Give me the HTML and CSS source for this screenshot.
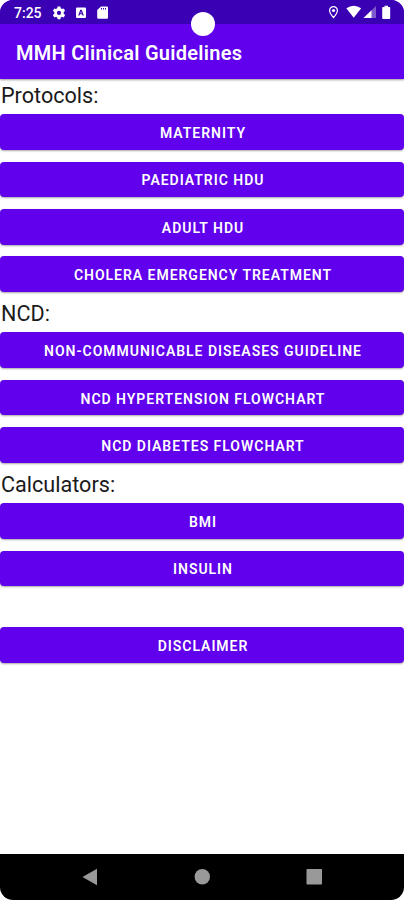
FILE: index.html
```html
<!DOCTYPE html>
<html lang="en">
<head>
<meta charset="utf-8">
<title>MMH Clinical Guidelines</title>
<link rel="stylesheet" href="styles.css">
</head>
<body>
<div class="phone">
  <header class="top">
    <div class="status">
      <span class="time">7:25</span>
      <svg class="left-icons" width="58" height="24" viewBox="0 0 58 24" fill="#fff">
        <path fill-rule="evenodd" d="M5.600 6.500h2.800l.4 1.800 1.200.7 1.700-.6 1.400 2.400-1.400 1.300v1.600l1.400 1.300-1.400 2.400-1.700-.6-1.200.7-.4 1.800H5.600l-.4-1.800-1.200-.7-1.700.6-1.400-2.400 1.400-1.300v-1.600L.9 10.800l1.400-2.400 1.700.6 1.200-.7zM7 10.800a2.100 2.100 0 1 0 0 4.200 2.100 2.100 0 0 0 0-4.200z"/>
        <path fill-rule="evenodd" d="M25 7.500h8q1 0 1 1v8.500q0 1-1 1h-8q-1 0-1-1v-8.500q0-1 1-1zm3.300 2.300-2.100 5.800h1.300l.5-1.400h2l.5 1.400h1.300l-2.100-5.800zm.7 1.700.7 1.800h-1.400z"/>
        <path fill-rule="evenodd" d="M49 6.500h6q1 0 1 1v10.300q0 1-1 1h-8.800q-1 0-1-1V10zM49 8v1.500h1V8zm2 0v1.500h1V8zm2 0v1.500h1V8z"/>
      </svg>
      <svg class="right-icons" width="64" height="24" viewBox="0 0 64 24" fill="#fff">
        <path d="M5.500 6.600a3.900 3.900 0 0 0-3.900 3.900c0 2.700 3.900 7 3.900 7s3.900-4.300 3.900-7a3.900 3.900 0 0 0-3.900-3.900z" fill="none" stroke="#fff" stroke-width="1.200"/>
        <circle cx="5.500" cy="10.500" r="1.600"/>
        <path d="M18.300 8.300Q25.700 3.200 33.200 8.300L25.700 17.700z"/>
        <path d="M48 6v12H35.500z" opacity=".35"/>
        <path d="M43.500 10.300V18h-8z"/>
        <path d="M56.500 5.800h3.500v1.200h1.500q.7 0 .7.700v10.300q0 .9-.9.900h-6.200q-.9 0-.9-.9V7.700q0-.7.700-.7h1.600z"/>
      </svg>
    </div>
    <h1 class="title">MMH Clinical Guidelines</h1>
    <span class="camera"></span>
  </header>
  <main class="content">
    <h2 class="heading">Protocols:</h2>
    <button class="btn">MATERNITY</button>
    <button class="btn">PAEDIATRIC HDU</button>
    <button class="btn">ADULT HDU</button>
    <button class="btn">CHOLERA EMERGENCY TREATMENT</button>
    <h2 class="heading">NCD:</h2>
    <button class="btn">NON-COMMUNICABLE DISEASES GUIDELINE</button>
    <button class="btn">NCD HYPERTENSION FLOWCHART</button>
    <button class="btn">NCD DIABETES FLOWCHART</button>
    <h2 class="heading">Calculators:</h2>
    <button class="btn">BMI</button>
    <button class="btn">INSULIN</button>
    <button class="btn disclaimer">DISCLAIMER</button>
  </main>
  <nav class="nav">
    <svg width="404" height="46" viewBox="0 0 404 46" fill="#999">
      <path d="M97 14.800v16.400L82.500 23z"/>
      <circle cx="202.300" cy="22.800" r="7.700"/>
      <rect x="306.500" y="15" width="15.500" height="15.500" rx=".8"/>
    </svg>
  </nav>
</div>
</body>
</html>
```
FILE: styles.css
```css
* { box-sizing: border-box; }

body {
  margin: 0;
  background: #fff;
  font-family: Roboto, "Liberation Sans", sans-serif;
}

.phone {
  width: 404px;
  height: 900px;
  display: flex;
  flex-direction: column;
  overflow: hidden;
  border-radius: 13px;
  background: #fff;
}

.top {
  position: relative;
  height: 78.500px;
  flex: none;
  background: #6000ec;
  box-shadow: 0 1px 2px rgba(0, 0, 0, .4);
}

.status {
  display: flex;
  align-items: center;
  height: 24px;
  padding: 0 12px 0 14px;
  background: #3a00b3;
  color: #fff;
}

.time {
  width: 38px;
  padding-top: 2px;
  font-size: 14px;
  font-weight: 500;
}

.right-icons { margin-left: auto; }

.title {
  margin: 0;
  padding-left: 16px;
  color: #fff;
  font-size: 20px;
  font-weight: 600;
  letter-spacing: .28px;
  line-height: 58px;
  white-space: nowrap;
}

.camera {
  position: absolute;
  left: 191px;
  top: 12px;
  width: 24px;
  height: 24px;
  border-radius: 50%;
  background: #fff;
}

.content {
  flex: 1;
  display: flex;
  flex-direction: column;
  padding-top: 1.200px;
}

.heading {
  flex: none;
  height: 28.800px;
  margin: 0;
  padding-left: 1px;
  color: #1a1a1a;
  font-size: 21.600px;
  font-weight: 400;
  line-height: 31px;
}

.btn {
  flex: none;
  height: 35.500px;
  margin: 5.900px 0 5.950px;
  padding: 2px 0 0 2px;
  border: 0;
  border-radius: 4px;
  background: #6000ec;
  box-shadow: 0 1px 2px rgba(0, 0, 0, .35);
  color: #fff;
  font-family: inherit;
  font-size: 14px;
  font-weight: 600;
  letter-spacing: .97px;
}

.disclaimer { margin-top: 35.300px; }

.nav {
  flex: none;
  height: 46.500px;
  background: #000;
}

.nav svg { display: block; }
```
